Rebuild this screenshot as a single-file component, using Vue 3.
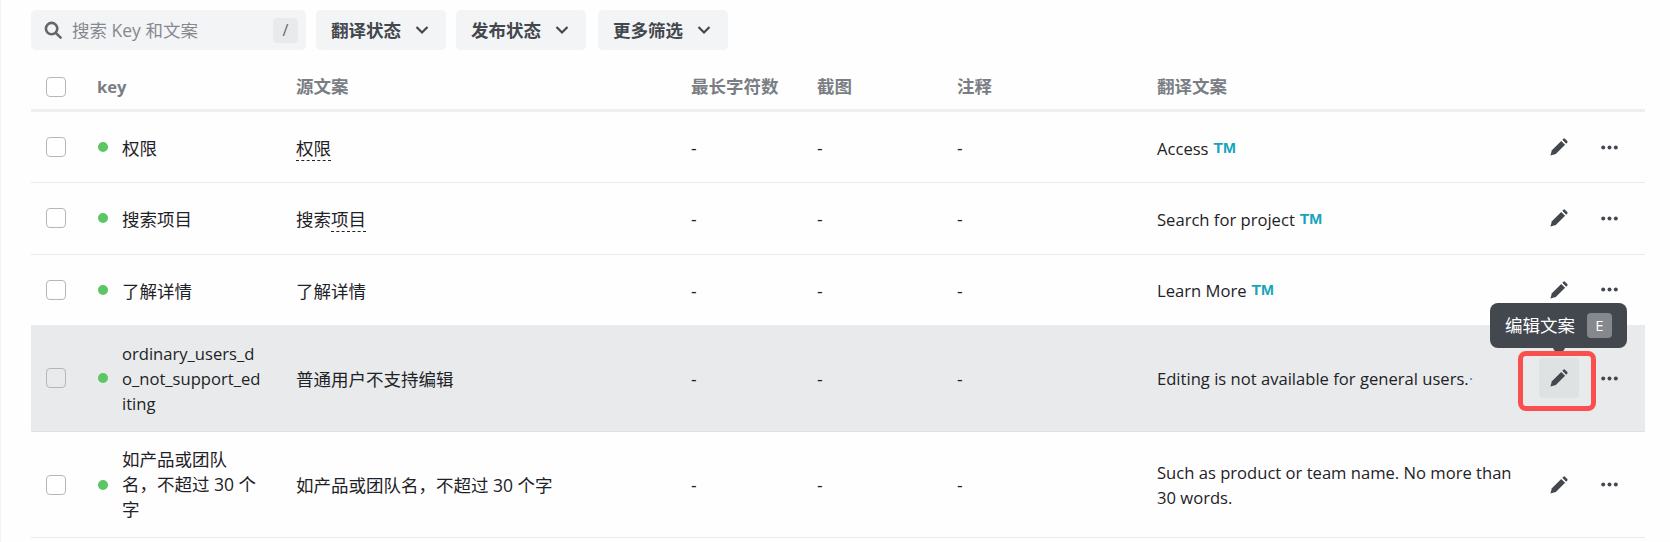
<script setup>
const rows = [
  { key: '权限', source: '', mark: '权限', text: 'Access', tm: true },
  { key: '搜索项目', source: '搜索', mark: '项目', text: 'Search for project', tm: true },
  { key: '了解详情', source: '了解详情', mark: '', text: 'Learn More', tm: true },
  { key: 'ordinary_users_do_not_support_editing', source: '普通用户不支持编辑', mark: '', text: 'Editing is not available for general users.', cursor: true, active: true, tall: true, latin: true },
  { key: '如产品或团队名，不超过 30 个字', source: '如产品或团队名，不超过 30 个字', mark: '', text: 'Such as product or team name. No more than 30 words.', tall: true },
];

const filters = ['翻译状态', '发布状态', '更多筛选'];
const columns = ['最长字符数', '截图', '注释', '翻译文案'];
const watermarks = Array.from({ length: 27 });
</script>

<template>
  <div class="page">
    <div class="toolbar">
      <div class="search">
        <svg class="search-icon" viewBox="0 0 18 18" fill="none" stroke="#63676c" stroke-width="2.6">
          <circle cx="7.6" cy="7.6" r="5.7" />
          <path d="M11.8 11.8 L16.6 16.6" stroke-linecap="round" />
        </svg>
        <span class="placeholder">搜索 Key 和文案</span>
        <kbd class="slash">/</kbd>
      </div>
      <button v-for="f in filters" :key="f" class="filter">
        <span>{{ f }}</span>
        <svg class="chevron" viewBox="0 0 14 10" fill="none" stroke="#43474e" stroke-width="2.2">
          <path d="M1.5 2 L7 7.5 L12.5 2" />
        </svg>
      </button>
    </div>

    <div class="table">
      <div class="row head">
        <div class="cell-check"><span class="checkbox"></span></div>
        <div class="latin">key</div>
        <div>源文案</div>
        <div v-for="c in columns" :key="c">{{ c }}</div>
        <div></div>
      </div>

      <div v-for="row in rows" :key="row.key" class="row" :class="{ active: row.active, tall: row.tall }">
        <div class="cell-check"><span class="checkbox"></span></div>
        <div class="cell-key">
          <span class="dot"></span>
          <span class="key-text" :class="{ latin: row.latin }">{{ row.key }}</span>
        </div>
        <div class="cell">{{ row.source }}<span v-if="row.mark" class="term">{{ row.mark }}</span></div>
        <div class="cell">-</div>
        <div class="cell">-</div>
        <div class="cell">-</div>
        <div class="latin translation">
          {{ row.text }}<span v-if="row.cursor" class="cursor">·</span><span v-if="row.tm" class="tm">TM</span>
        </div>
        <div class="actions">
          <button class="icon-btn" :class="{ hovered: row.active }">
            <svg class="pencil" viewBox="0 0 18 18" fill="#43474e">
              <path d="M0.4 17.6 L1.9 12.2 L11.2 2.9 L15.1 6.8 L5.8 16.1 Z" />
              <path d="M12.3 1.8 L13.4 0.7 Q14.2 0 15 0.7 L17.3 3 Q18 3.8 17.3 4.6 L16.2 5.7 Z" />
            </svg>
            <template v-if="row.active">
              <span class="tooltip">
                编辑文案
                <kbd class="tip-key">E</kbd>
              </span>
              <span class="highlight"></span>
            </template>
          </button>
          <button class="icon-btn">
            <svg class="more" viewBox="0 0 17 5" fill="#43474e">
              <circle cx="2.2" cy="2.5" r="2" />
              <circle cx="8.5" cy="2.5" r="2" />
              <circle cx="14.8" cy="2.5" r="2" />
            </svg>
          </button>
        </div>
      </div>
    </div>

    <div class="watermarks">
      <span v-for="(_, i) in watermarks" :key="i" class="mark">zhanglin.rachel</span>
    </div>
  </div>
</template>

<style>
html,
body {
  margin: 0;
  background: #fff;
}
</style>

<style scoped>
.page {
  position: relative;
  width: 1670px;
  height: 542px;
  overflow: hidden;
  box-sizing: border-box;
  padding: 10px 25px 0 30px;
  background: #fefefe;
  border-left: 1px solid #f3f3f3;
  font-family: 'Open Sans', 'Noto Sans CJK SC', sans-serif;
  font-size: 17.5px;
  line-height: 25px;
  color: #1e2227;
}
.toolbar {
  display: flex;
  gap: 10px;
  height: 40px;
}
.search {
  width: 275px;
  box-sizing: border-box;
  display: flex;
  align-items: center;
  padding: 0 8px 0 13px;
  background: #f3f4f5;
  border-radius: 5px;
}
.search-icon {
  width: 18px;
  height: 18px;
  margin-right: 10px;
}
.placeholder {
  flex: 1;
  color: #85898f;
}
.slash {
  width: 25px;
  height: 25px;
  background: #e8eaec;
  border-radius: 4px;
  display: flex;
  align-items: center;
  justify-content: center;
  font-family: inherit;
  font-size: 16px;
  color: #63676c;
}
.filter {
  width: 130px;
  display: flex;
  align-items: center;
  justify-content: space-between;
  padding: 0 17px 0 15px;
  border: 0;
  background: #f3f4f5;
  border-radius: 5px;
  font: inherit;
  font-weight: 700;
  color: #43474e;
}
.filter:last-child {
  margin-left: 2px;
}
.chevron {
  width: 14px;
  height: 10px;
}
.table {
  margin-top: 10px;
}
.row {
  display: grid;
  grid-template-columns: 66px 199px 395px 126px 140px 200px 1fr 122px;
  align-items: center;
  box-sizing: border-box;
  min-height: 71.25px;
  padding: 15.125px 0;
  border-bottom: 1px solid #e9eaeb;
}
.row.head {
  min-height: 0;
  height: 52px;
  padding: 4px 0 0;
  border-bottom: 3px solid #eeeff0;
  font-weight: 700;
  color: #7a7e84;
}
.row.active {
  background: #e8eaeb;
  border-bottom-color: #dfe1e2;
}
.latin {
  font-size: 16.6px;
}
.cell {
  padding-top: 3px;
}
.row.tall .cell {
  padding-top: 2px;
}
.translation {
  padding-top: 1px;
}
.cell-check {
  padding-left: 15px;
  display: flex;
}
.checkbox {
  width: 20px;
  height: 20px;
  box-sizing: border-box;
  border: 1.5px solid #b4b7ba;
  border-radius: 4px;
  background: #fff;
}
.active .checkbox {
  background: #e8eaeb;
}
.cell-key {
  display: flex;
  align-items: center;
  padding-left: 1px;
}
.dot {
  flex: none;
  width: 10px;
  height: 10px;
  border-radius: 50%;
  background: #5cc564;
  margin-right: 14px;
}
.key-text {
  width: 139.5px;
  word-break: break-all;
  padding-top: 3px;
}
.row.tall .key-text {
  padding-top: 0;
}
.term {
  border-bottom: 1px dashed #1e2227;
}
.cursor {
  color: #2196f3;
}
.tm {
  margin-left: 5px;
  font-family: 'Liberation Sans', sans-serif;
  font-size: 15.5px;
  font-weight: 700;
  color: #16a5b8;
  vertical-align: 1.5px;
}
.actions {
  display: flex;
  gap: 10px;
  padding-left: 16px;
}
.icon-btn {
  position: relative;
  width: 40px;
  height: 40px;
  padding: 0;
  border: 0;
  background: transparent;
  border-radius: 4px;
  display: flex;
  align-items: center;
  justify-content: center;
  font: inherit;
}
.icon-btn.hovered {
  background: #dfe2e3;
}
.pencil {
  width: 18px;
  height: 18px;
}
.more {
  width: 17px;
  height: 5px;
}
.tooltip {
  position: absolute;
  left: -49px;
  bottom: 50px;
  width: 137px;
  height: 45px;
  box-sizing: border-box;
  padding-left: 15px;
  display: flex;
  align-items: center;
  gap: 12px;
  background: #43474e;
  border-radius: 8px;
  color: #fff;
  white-space: nowrap;
}
.tooltip::after {
  content: '';
  position: absolute;
  left: 63px;
  bottom: -4px;
  width: 12px;
  height: 6px;
  background: #43474e;
  border-radius: 0 0 5px 5px;
}
.tip-key {
  width: 25px;
  height: 25px;
  background: #85898e;
  border-radius: 4px;
  display: flex;
  align-items: center;
  justify-content: center;
  font-family: inherit;
  font-size: 15px;
  color: #fff;
}
.highlight {
  position: absolute;
  left: -21px;
  right: -17px;
  top: -7px;
  bottom: -13px;
  border: 5px solid #fb4f4f;
  border-radius: 8px;
}
.watermarks {
  position: absolute;
  top: 11px;
  left: -38px;
  display: grid;
  grid-template-columns: repeat(9, 188px);
  grid-auto-rows: 188px;
  pointer-events: none;
}
.mark {
  display: flex;
  align-items: center;
  justify-content: center;
  transform: rotate(-17deg);
  font-size: 20px;
  color: rgba(0, 0, 0, 0.025);
}
</style>
